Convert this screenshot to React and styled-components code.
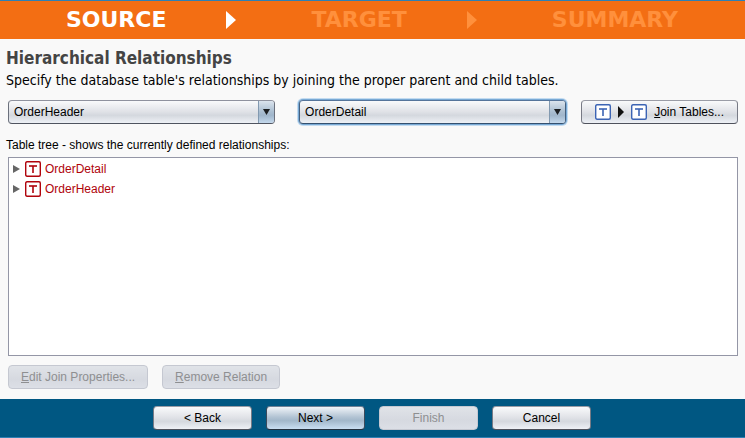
import { useState } from "react";
import styled, { createGlobalStyle } from "styled-components";

const tables = ["OrderHeader", "OrderDetail"];
const tree = ["OrderDetail", "OrderHeader"];

const TableIcon = ({ color, tint }) => (
    <Icon width="16" height="16" viewBox="0 0 16 16" aria-hidden="true">
        <rect width="16" height="16" rx="2" fill={tint} />
        <rect x="0.7" y="0.7" width="14.6" height="14.6" rx="1.5" fill="#fff" stroke={color} strokeWidth="1.4" />
        <path d="M4 5H12" fill="none" stroke={color} strokeWidth="1.6" />
        <path d="M8 5V12" fill="none" stroke={color} strokeWidth="1.6" />
    </Icon>
);

const Chevron = ({ color }) => (
    <StepArrow width="10" height="18" viewBox="0 0 10 18" aria-hidden="true">
        <path d="M0 0L10 9L0 18Z" fill={color} />
    </StepArrow>
);

const TableSelect = ({ label, value, onChange, focused }) => (
    <SelectBox $focused={focused}>
        <Select aria-label={label} value={value} onChange={e => onChange(e.target.value)}>
            {tables.map(name => <option key={name}>{name}</option>)}
        </Select>
        <SelectArrow>
            <svg width="7" height="6" viewBox="0 0 7 6" aria-hidden="true">
                <path d="M0 0H7L3.5 6Z" fill="#1c1f22" />
            </svg>
        </SelectArrow>
    </SelectBox>
);

const App = () => {
    const [parent, setParent] = useState("OrderHeader");
    const [child, setChild] = useState("OrderDetail");

    return (
        <Page>
            <GlobalStyle />

            <Steps>
                <Step $active>SOURCE</Step>
                <Chevron color="#fff" />
                <Step>TARGET</Step>
                <Chevron color="#ff903c" />
                <Step>SUMMARY</Step>
            </Steps>

            <Content>
                <Title>Hierarchical Relationships</Title>
                <Intro>
                    Specify the database table's relationships by joining the proper parent and child tables.
                </Intro>

                <JoinRow>
                    <Selects>
                        <TableSelect label="Parent table" value={parent} onChange={setParent} />
                        <TableSelect label="Child table" value={child} onChange={setChild} focused />
                    </Selects>
                    <JoinButton type="button">
                        <TableIcon color="#3c64b4" tint="#b4c6e8" />
                        <svg width="6" height="12" viewBox="0 0 6 12" aria-hidden="true">
                            <path d="M0 0L6 6L0 12Z" fill="#111" />
                        </svg>
                        <TableIcon color="#3c64b4" tint="#b4c6e8" />
                        <span><u>J</u>oin Tables...</span>
                    </JoinButton>
                </JoinRow>

                <TreeLabel id="tree-label">Table tree - shows the currently defined relationships:</TreeLabel>
                <Tree role="tree" aria-labelledby="tree-label">
                    {tree.map(name => (
                        <TreeItem key={name} role="treeitem" aria-expanded="false">
                            <Expander type="button" aria-label={`Expand ${name}`}>
                                <svg width="7" height="8" viewBox="0 0 7 8" aria-hidden="true">
                                    <path d="M0 0L7 4L0 8Z" fill="#666" />
                                </svg>
                            </Expander>
                            <TableIcon color="#b0040c" tint="#eab4b6" />
                            {name}
                        </TreeItem>
                    ))}
                </Tree>

                <Actions>
                    <Button type="button" disabled><u>E</u>dit Join Properties...</Button>
                    <Button type="button" disabled><u>R</u>emove Relation</Button>
                </Actions>
            </Content>

            <Footer>
                <FooterButton type="button">&lt; Back</FooterButton>
                <FooterButton type="button" $primary>Next &gt;</FooterButton>
                <FooterButton type="button" disabled>Finish</FooterButton>
                <FooterButton type="button">Cancel</FooterButton>
            </Footer>
        </Page>
    );
}


export default App;


const GlobalStyle = createGlobalStyle`
    * {
        box-sizing: border-box;
    }

    body {
        margin: 0;
        background-color: #f9f9f9;
        color: #000;
        font: 12px/16px "Liberation Sans", Arial, sans-serif;
    }
`;

const Page = styled.div`
    min-height: 100vh;
    display: flex;
    flex-direction: column;
`;

const Steps = styled.header`
    display: flex;
    align-items: center;
    justify-content: center;
    padding: 6px 1px 6px 0;
    border-top: 1px solid #2e80b4;
    background-color: #f36e13;
`;

const Step = styled.span`
    color: ${props => props.$active ? "#fff" : "#ff903c"};
    font: bold 22px/26px "DejaVu Sans", Verdana, sans-serif;
`;

const StepArrow = styled.svg`
    margin: 0 75px 0 60px;
`;

const Icon = styled.svg`
    flex: none;
`;

const Content = styled.main`
    flex: 1;
    display: flex;
    flex-direction: column;
    padding: 8px 7px 10px 8px;
`;

const Title = styled.h1`
    margin: 0 0 0 -2px;
    color: #444;
    font: bold 17px/22px "DejaVu Sans Condensed", "DejaVu Sans", Tahoma, sans-serif;
`;

const Intro = styled.p`
    margin: 0 0 9px -2px;
    font: 14px/22px "DejaVu Sans Condensed", "DejaVu Sans", Verdana, sans-serif;
`;

const JoinRow = styled.div`
    display: flex;
    gap: 15px;
`;

const Selects = styled.div`
    flex: 1;
    display: grid;
    grid-template-columns: 1fr 1fr;
    gap: 24px;
`;

const SelectBox = styled.div`
    position: relative;
    height: 24px;
    overflow: hidden;
    border: 1px solid #777b88;
    border-color: #8f929e #6b707c #4f545f;
    border-radius: 4px;
    background: linear-gradient(#f9fafb, #dfe1e6 50%, #d4d8de 65%, #eef1f6);

    ${props => props.$focused && `
        border-color: #55749a #44607f #34506f;
        box-shadow: 0 0 0 1px #78a9d5, 0 0 0 2px #c3dbf0;
    `}
`;

const Select = styled.select`
    appearance: none;
    width: 100%;
    height: 100%;
    padding: 0 24px 0 5px;
    border: 0;
    outline: 0;
    background: transparent;
    color: #000;
    font: inherit;
`;

const SelectArrow = styled.span`
    position: absolute;
    top: 0;
    right: 0;
    bottom: 0;
    width: 16px;
    display: flex;
    align-items: center;
    justify-content: center;
    border-left: 1px solid #8299b0;
    background: linear-gradient(#dbe4ed, #a9bdd0 50%, #a0b6cb 65%, #c4d9ed);
    pointer-events: none;
`;

const Button = styled.button`
    height: 24px;
    padding: 0 12px;
    border: 1px solid;
    border-color: ${props => props.$primary ? "#6f8196 #3c4a5b #25313f" : "#9a9ca6 #777a85 #4f525c"};
    border-radius: 4px;
    background: ${props => props.$primary
        ? "linear-gradient(#f0f4f8, #b3c4d4 45%, #a2b7ca 62%, #c9def2)"
        : "linear-gradient(#f9fafb, #dfe1e6 50%, #d4d8de 65%, #eef1f6)"};
    color: #000;
    font: inherit;
    white-space: nowrap;

    &:disabled {
        border-color: #c5c8d1;
        background: linear-gradient(#e0e3e8, #d6d9e0 60%, #dcdfe6);
        color: #8e8f91;
    }
`;

const JoinButton = styled(Button)`
    display: flex;
    align-items: center;
    gap: 7px;
    padding: 0 13px;
`;

const TreeLabel = styled.div`
    margin: 13px 0 4px -2px;
`;

const Tree = styled.ul`
    flex: 1;
    margin: 0;
    padding: 1px 4px;
    border: 1px solid #9496a6;
    background-color: #fff;
    list-style: none;
`;

const TreeItem = styled.li`
    display: flex;
    align-items: center;
    gap: 4px;
    height: 20px;
    color: #b0040c;
`;

const Expander = styled.button`
    display: flex;
    width: 8px;
    padding: 0;
    border: 0;
    background: none;
`;

const Actions = styled.div`
    display: flex;
    gap: 14px;
    margin-top: 9px;
`;

const FooterButton = styled(Button)`
    width: 99px;
`;

const Footer = styled.footer`
    display: flex;
    justify-content: center;
    gap: 14px;
    padding: 7px 1px 7px 0;
    border-bottom: 1px solid #2e80b4;
    background-color: #005782;
`;
